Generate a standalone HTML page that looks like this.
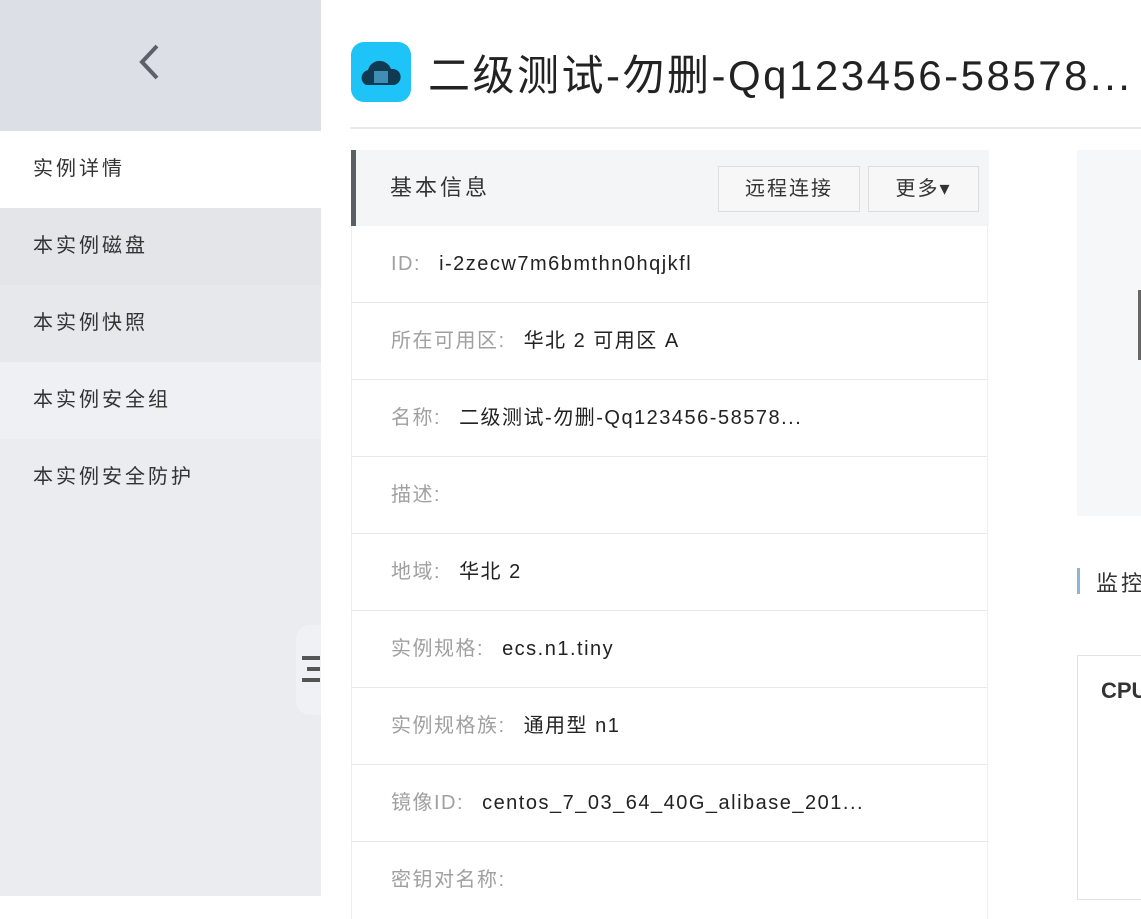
<!DOCTYPE html>
<html><head><meta charset="utf-8"><style>
*{margin:0;padding:0;box-sizing:border-box}
body{width:1141px;height:896px;overflow:hidden;background:#fff;font-family:"Liberation Sans","Noto Sans CJK SC",sans-serif;position:relative}
.side{position:absolute;left:0;top:0;width:321px;height:896px;background:#eaecf0}
.top{position:absolute;left:0;top:0;width:321px;height:131px;background:#dcdfe5}
.it{position:absolute;left:0;width:321px;height:77px;font-size:20px;letter-spacing:3px;color:#333;padding-left:33px;line-height:77px}
.row{position:absolute;left:351px;width:637px;height:77px;border-bottom:1px solid #e8e8e8;border-left:1px solid #eee;border-right:1px solid #eee;font-size:20px;letter-spacing:1.5px;line-height:77px;padding-left:39px;color:#222;white-space:nowrap}
.row span{color:#a0a0a0;margin-right:18px}
.btn{position:absolute;top:166px;height:46px;border:1px solid #ddd;background:#f7f7f7;font-size:20px;letter-spacing:2px;color:#333;text-align:center;line-height:44px}
</style></head><body>
<div class="side"></div>
<div class="top"></div>
<svg style="position:absolute;left:136px;top:42px" width="26" height="40"><path d="M21 4 L6 20 L21 36" stroke="#5c6068" stroke-width="4" fill="none"/></svg>
<div class="it" style="top:131px;background:#fff">实例详情</div>
<div class="it" style="top:208px;background:#e3e5e9">本实例磁盘</div>
<div class="it" style="top:285px;background:#e6e8ec">本实例快照</div>
<div class="it" style="top:362px;background:#eff0f3">本实例安全组</div>
<div class="it" style="top:439px">本实例安全防护</div>
<div style="position:absolute;left:296px;top:625px;width:25px;height:90px;background:#f0f1f4;border-radius:14px 0 0 14px"></div>
<div style="position:absolute;left:302px;top:656px;width:18px;height:4px;background:#555"></div>
<div style="position:absolute;left:307px;top:667px;width:13px;height:4px;background:#555"></div>
<div style="position:absolute;left:302px;top:678px;width:18px;height:4px;background:#555"></div>
<div style="position:absolute;left:351px;top:42px;width:60px;height:60px;background:#1ec3f7;border-radius:13px"></div>
<svg style="position:absolute;left:358px;top:55px" width="46" height="36"><path d="M8 30 a8 8 0 0 1 2-15 a12 12 0 0 1 23-1 a8 8 0 0 1 3 16 z" fill="#103a52"/><rect x="16" y="16" width="14" height="12" fill="#3f8fb5"/></svg>
<div style="position:absolute;left:428px;top:42px;font-size:42px;letter-spacing:2.5px;color:#222;white-space:nowrap">二级测试-勿删-Qq123456-58578...</div>
<div style="position:absolute;left:350px;top:127px;width:791px;height:2px;background:#e9e9e9"></div>
<div style="position:absolute;left:351px;top:150px;width:638px;height:76px;background:#f4f5f7;border-left:5px solid #5a5f66;font-size:22px;letter-spacing:3px;line-height:76px;padding-left:34px;color:#333">基本信息</div>
<div class="btn" style="left:718px;width:142px">远程连接</div>
<div class="btn" style="left:868px;width:111px">更多▾</div>
<div class="row" style="top:226px"><span>ID:</span>i-2zecw7m6bmthn0hqjkfl</div>
<div class="row" style="top:303px"><span>所在可用区:</span>华北 2 可用区 A</div>
<div class="row" style="top:380px"><span>名称:</span>二级测试-勿删-Qq123456-58578...</div>
<div class="row" style="top:457px"><span>描述:</span></div>
<div class="row" style="top:534px"><span>地域:</span>华北 2</div>
<div class="row" style="top:611px"><span>实例规格:</span>ecs.n1.tiny</div>
<div class="row" style="top:688px"><span>实例规格族:</span>通用型 n1</div>
<div class="row" style="top:765px"><span>镜像ID:</span>centos_7_03_64_40G_alibase_201...</div>
<div class="row" style="top:842px;border-bottom:none"><span>密钥对名称:</span></div>
<div style="position:absolute;left:1077px;top:150px;width:64px;height:366px;background:#f6f7f9"></div>
<div style="position:absolute;left:1138px;top:290px;width:3px;height:70px;background:#666"></div>
<div style="position:absolute;left:1077px;top:568px;width:3px;height:26px;background:#8fb4d8"></div>
<div style="position:absolute;left:1096px;top:566px;font-size:22px;letter-spacing:3px;color:#333;white-space:nowrap">监控</div>
<div style="position:absolute;left:1077px;top:655px;width:70px;height:245px;border:1px solid #e3e3e3"></div>
<div style="position:absolute;left:1101px;top:678px;font-size:22px;font-weight:bold;color:#333">CPU</div>
</body></html>
